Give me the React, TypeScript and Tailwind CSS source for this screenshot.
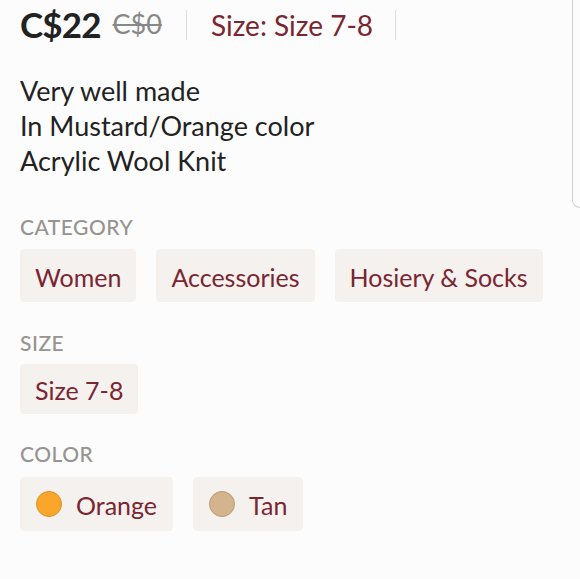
export default function App() {
  const categories = ["Women", "Accessories", "Hosiery & Socks"]
  const colors = [
    { name: "Orange", swatch: "bg-[#f9a62b] border-[#d99024]" },
    { name: "Tan", swatch: "bg-[#d4b48d] border-[#b89a76]" },
  ]

  return (
    <main className="relative w-[580px] h-[579px] overflow-hidden bg-[#fcfcfc] font-['Lato',sans-serif] pl-5">
      <div className="absolute right-0 top-0 w-2 h-[208px] border-l border-b border-[#cfcfcf] rounded-bl-lg"></div>

      <div className="flex items-center h-[48px] pt-[1px]">
        <span className="text-[35px] font-bold text-[#222] tracking-tight">C$22</span>
        <span className="ml-3 text-[27px] text-[#888] line-through">C$0</span>
        <span className="mx-[24px] w-px h-[30px] bg-[#ddd]"></span>
        <span className="text-[28px] text-[#7a2530]">Size: Size 7-8</span>
        <span className="ml-[22px] w-px h-[30px] bg-[#ddd]"></span>
      </div>

      <div className="mt-[25px] text-[27px] leading-[35px] text-[#222]">
        <p>Very well made</p>
        <p>In Mustard/Orange color</p>
        <p>Acrylic Wool Knit</p>
      </div>

      <h3 className="mt-[37px] text-[21px] leading-[24px] font-medium uppercase tracking-[0.5px] text-[#979390]">Category</h3>
      <div className="mt-[10px] flex gap-5">
        {categories.map(c => (
          <span key={c} className="h-[53px] px-[15px] pt-1 flex items-center rounded bg-[#f5f1ee] text-[25px] text-[#7a2530]">{c}</span>
        ))}
      </div>

      <h3 className="mt-[29px] text-[21px] leading-[24px] font-medium uppercase tracking-[0.5px] text-[#979390]">Size</h3>
      <div className="mt-[9px] flex">
        <span className="h-[50px] px-[15px] pt-1 flex items-center rounded bg-[#f5f1ee] text-[25px] text-[#7a2530]">Size 7-8</span>
      </div>

      <h3 className="mt-[28px] text-[21px] leading-[24px] font-medium uppercase tracking-[0.5px] text-[#979390]">Color</h3>
      <div className="mt-[11px] flex gap-5">
        {colors.map(c => (
          <span key={c.name} className="h-[54px] pl-[16px] pr-4 pt-1 flex items-center gap-[14px] rounded bg-[#f5f1ee] text-[25px] text-[#7a2530]">
            <span className={`-mt-1 w-[26px] h-[26px] rounded-full border ${c.swatch}`}></span>
            {c.name}
          </span>
        ))}
      </div>
    </main>
  )
}
